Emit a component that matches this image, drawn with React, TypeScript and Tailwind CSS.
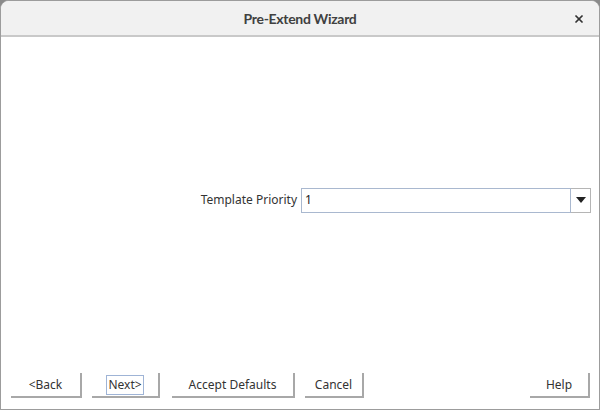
import { X } from 'lucide-react';

const FONT = { fontFamily: '"Noto Sans", "Open Sans", sans-serif' };

function BevelButton({ label, focused, className }: { label: string; focused?: boolean; className?: string }) {
  return (
    <button
      className={`flex h-[25px] items-center justify-center border-r-2 border-b-2 border-[#a8a8a8] bg-white text-[12px] text-[#333] ${className ?? ''}`}
    >
      <span className={focused ? 'border border-[#9fb4d6] px-[1px] leading-[18px]' : 'leading-[18px]'}>{label}</span>
    </button>
  );
}

export default function App() {
  return (
    <div className="h-[410px] w-[600px] bg-[#8a8a8a]" style={FONT}>
      <div className="flex h-full w-full flex-col overflow-hidden rounded-t-[9px] border border-[#9c9c9c] bg-white">
        {/* title bar */}
        <div className="relative flex h-[36px] shrink-0 items-center justify-center border-b-2 border-[#c9c9c9] bg-[#f1f1f1]">
          <span
            className="text-[14px] font-bold tracking-[-0.3px] text-[#404040]"
            style={{ fontFamily: 'Lato, "Noto Sans", sans-serif' }}
          >
            Pre-Extend Wizard
          </span>
          <X className="absolute right-[14px] top-[12px] size-[12px] text-[#333]" strokeWidth={3.5} />
        </div>

        {/* body */}
        <div className="flex flex-1 items-center justify-end pr-[8px] pb-[10px]">
          <span className="mr-[4px] text-[12px] text-[#333]">Template Priority</span>
          <div className="flex h-[25px] w-[290px]">
            <div className="flex flex-1 items-center border border-[#a9b8cf] pl-[3px] text-[12px] text-[#222]">1</div>
            <div className="flex w-[20px] items-center justify-center border border-l-0 border-[#b5b5b5]">
              <svg width="10" height="6" viewBox="0 0 10 6">
                <path d="M0 0 L10 0 L5 6 Z" fill="#222" />
              </svg>
            </div>
          </div>
        </div>

        {/* buttons */}
        <div className="flex h-[36px] shrink-0 items-start pl-[10px] pr-[9px]">
          <BevelButton label="<Back" className="w-[71px]" />
          <BevelButton label="Next>" focused className="ml-[10px] w-[68px]" />
          <BevelButton label="Accept Defaults" className="ml-[12px] w-[123px]" />
          <BevelButton label="Cancel" className="ml-[10px] w-[59px]" />
          <div className="flex-1" />
          <BevelButton label="Help" className="w-[60px]" />
        </div>
      </div>
    </div>
  );
}
